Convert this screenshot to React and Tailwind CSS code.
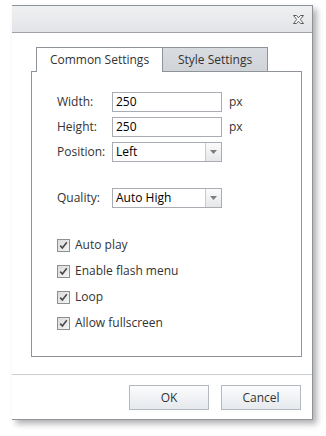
import React from 'react';

const CloseIcon = () => (
  <svg width="13" height="11" viewBox="0 0 13 11">
    <path
      d="M1.5 1.5 H4.5 L6.5 3.8 L8.5 1.5 H11.5 L8.2 5.5 L11.5 9.5 H8.5 L6.5 7.2 L4.5 9.5 H1.5 L4.8 5.5 Z"
      fill="#fff"
      stroke="#5a5a5a"
      strokeWidth="1"
      strokeLinejoin="miter"
    />
  </svg>
);

const TextField = ({ value }) => (
  <div className="w-[110px] h-[20px] border border-[#a9acb2] bg-white flex items-center px-[3px] text-[12px] text-black">
    {value}
  </div>
);

const SelectField = ({ value }) => (
  <div className="w-[110px] h-[20px] border border-[#a9acb2] bg-white flex">
    <div className="flex-1 flex items-center px-[3px] text-[12px] text-black">{value}</div>
    <div className="w-[16px] border-l border-[#c8cbd0] bg-gradient-to-b from-[#fbfbfb] to-[#e6e7e9] flex items-center justify-center">
      <svg width="7" height="4" viewBox="0 0 7 4">
        <path d="M0 0 H7 L3.5 4 Z" fill="#7a7d82" />
      </svg>
    </div>
  </div>
);

const CheckRow = ({ label }) => (
  <div className="flex items-center h-[26px]">
    <div className="w-[13px] h-[13px] border border-[#8e8f8f] bg-gradient-to-br from-[#dcdcdc] to-[#f4f4f4] flex items-center justify-center">
      <svg width="9" height="9" viewBox="0 0 9 9">
        <path d="M1.2 4.6 L3.4 7 L7.8 1.3" fill="none" stroke="#4a4a4a" strokeWidth="1.6" />
      </svg>
    </div>
    <span className="ml-[5px] text-[12px] text-[#333]">{label}</span>
  </div>
);

const Button = ({ children }) => (
  <button className="w-[80px] h-[25px] border border-[#b4b9c0] bg-gradient-to-b from-[#fbfcfd] to-[#e6e9ed] text-[12px] text-[#333]">
    {children}
  </button>
);

export default function App() {
  return (
    <div className="w-[326px] h-[436px] bg-white pt-[5px] pl-[12px] font-['Open_Sans',sans-serif]">
      <div className="w-[301px] h-[415px] bg-white flex flex-col border-t border-r border-b border-[#8f939a] shadow-[4px_4px_6px_rgba(0,0,0,0.3)]">
        {/* header */}
        <div className="h-[27px] border-b border-[#9ea2a8] bg-gradient-to-b from-[#eff0f2] to-[#e2e4e7] flex items-center justify-end pr-[7px]">
          <CloseIcon />
        </div>

        {/* body */}
        <div className="h-[342px] border-b border-[#c9ccd1] pt-[14px] pl-[19px]">
          <div className="flex ml-[5px] h-[25px]">
            <div className="w-[127px] h-[25px] border border-b-0 border-[#8f939a] bg-white flex items-center justify-center text-[12px] text-[#333] relative z-10">
              Common Settings
            </div>
            <div className="w-[105px] h-[25px] border border-l-0 border-[#8f939a] bg-gradient-to-b from-[#d9dce0] to-[#d0d3d7] flex items-center justify-center text-[12px] text-[#333]">
              Style Settings
            </div>
          </div>
          <div className="w-[271px] h-[286px] -mt-[1px] border border-[#8f939a] pt-[20px] pl-[25px]">
            <div className="flex flex-col gap-[5px]">
              <div className="flex items-center">
                <span className="w-[55px] text-[12px] text-[#333]">Width:</span>
                <TextField value="250" />
                <span className="ml-[7px] text-[12px] text-[#333]">px</span>
              </div>
              <div className="flex items-center">
                <span className="w-[55px] text-[12px] text-[#333]">Height:</span>
                <TextField value="250" />
                <span className="ml-[7px] text-[12px] text-[#333]">px</span>
              </div>
              <div className="flex items-center">
                <span className="w-[55px] text-[12px] text-[#333]">Position:</span>
                <SelectField value="Left" />
              </div>
              <div className="flex items-center mt-[21px]">
                <span className="w-[55px] text-[12px] text-[#333]">Quality:</span>
                <SelectField value="Auto High" />
              </div>
            </div>
            <div className="mt-[24px] flex flex-col">
              <CheckRow label="Auto play" />
              <CheckRow label="Enable flash menu" />
              <CheckRow label="Loop" />
              <CheckRow label="Allow fullscreen" />
            </div>
          </div>
        </div>

        {/* footer */}
        <div className="flex-1 flex justify-end items-start pt-[10px] pr-[11px] gap-[12px]">
          <Button>OK</Button>
          <Button>Cancel</Button>
        </div>
      </div>
    </div>
  );
}
